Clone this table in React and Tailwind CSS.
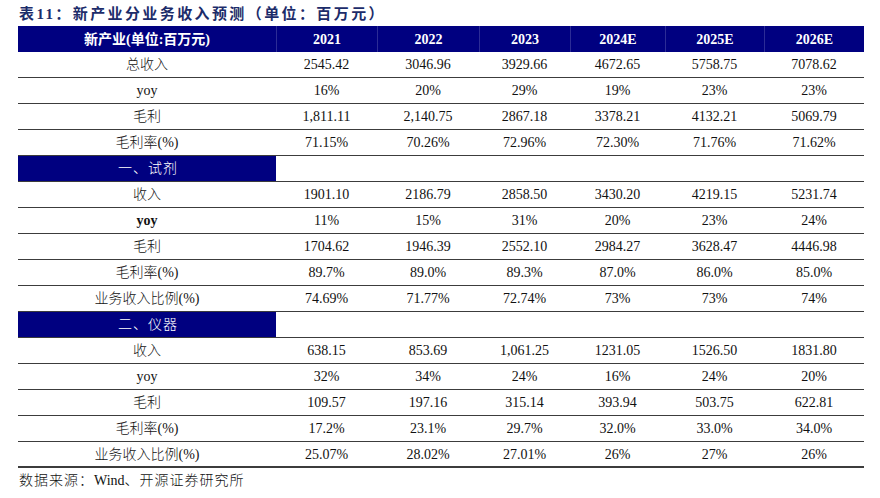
import React from "react";

// column template shared by header and body rows
const cols = "grid grid-cols-[258px_101px_102px_91px_95px_99px_100px]";

const years = ["2021", "2022", "2023", "2024E", "2025E", "2026E"];

const rows = [
  { label: "总收入", values: ["2545.42", "3046.96", "3929.66", "4672.65", "5758.75", "7078.62"] },
  { label: "yoy", values: ["16%", "20%", "29%", "19%", "23%", "23%"] },
  { label: "毛利", values: ["1,811.11", "2,140.75", "2867.18", "3378.21", "4132.21", "5069.79"] },
  { label: "毛利率(%)", values: ["71.15%", "70.26%", "72.96%", "72.30%", "71.76%", "71.62%"] },
  { section: "一、试剂" },
  { label: "收入", values: ["1901.10", "2186.79", "2858.50", "3430.20", "4219.15", "5231.74"] },
  { label: "yoy", bold: true, values: ["11%", "15%", "31%", "20%", "23%", "24%"] },
  { label: "毛利", values: ["1704.62", "1946.39", "2552.10", "2984.27", "3628.47", "4446.98"] },
  { label: "毛利率(%)", values: ["89.7%", "89.0%", "89.3%", "87.0%", "86.0%", "85.0%"] },
  { label: "业务收入比例(%)", values: ["74.69%", "71.77%", "72.74%", "73%", "73%", "74%"] },
  { section: "二、仪器" },
  { label: "收入", values: ["638.15", "853.69", "1,061.25", "1231.05", "1526.50", "1831.80"] },
  { label: "yoy", values: ["32%", "34%", "24%", "16%", "24%", "20%"] },
  { label: "毛利", values: ["109.57", "197.16", "315.14", "393.94", "503.75", "622.81"] },
  { label: "毛利率(%)", values: ["17.2%", "23.1%", "29.7%", "32.0%", "33.0%", "34.0%"] },
  { label: "业务收入比例(%)", values: ["25.07%", "28.02%", "27.01%", "26%", "27%", "26%"] },
];

const App = () => {
  return (
    <div className="w-[880px] h-[498px] bg-white font-['Liberation_Serif','Noto_Sans_CJK_SC',serif] text-[#111]">
      {/* Title */}
      <div className="pl-[19px] pt-[4px] h-[26px] text-[15px] font-bold tracking-[2.4px] text-[#1c2c6a] leading-[20px]">
        表11：新产业分业务收入预测（单位：百万元）
      </div>

      <div className="ml-[18px] w-[846px]">
        {/* Header row */}
        <div className={`${cols} h-[26px] bg-[#000080] text-white font-bold text-[14px]`}>
          <div className="flex items-center justify-center">新产业(单位:百万元)</div>
          {years.map((y) => (
            <div key={y} className="flex items-center justify-center border-l border-[#2c2c96]">
              {y}
            </div>
          ))}
        </div>

        {/* Body rows */}
        {rows.map((r, i) =>
          r.section ? (
            <div key={i} className={`${cols} h-[26px] border-b border-[#3c3c3c]`}>
              <div className="flex items-center pl-[100px] bg-[#000080] text-white text-[14px] font-light tracking-[1px]">
                {r.section}
              </div>
              <div className="col-span-6" />
            </div>
          ) : (
            <div
              key={i}
              className={`${cols} h-[26px] text-[14px] ${
                i === rows.length - 1 ? "border-b-2 border-[#3c3c3c]" : "border-b border-[#3c3c3c]"
              }`}
            >
              <div className={`flex items-center justify-center ${r.bold ? "font-bold" : "font-light"}`}>
                {r.label}
              </div>
              {r.values.map((v, j) => (
                <div key={j} className="flex items-center justify-center">
                  {v}
                </div>
              ))}
            </div>
          )
        )}
      </div>

      {/* Source note */}
      <div className="pl-[19px] pt-[4px] text-[14px] tracking-[1px] leading-[18px] font-light">
        数据来源：<span className="tracking-normal font-normal">Wind</span>、开源证券研究所
      </div>
    </div>
  );
};

export default App;
